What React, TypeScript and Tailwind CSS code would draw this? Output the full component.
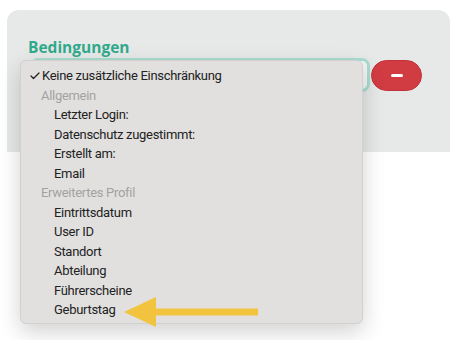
import { Check } from "lucide-react";

const groups = [
    { title: "Allgemein", items: ["Letzter Login:", "Datenschutz zugestimmt:", "Erstellt am:", "Email"] },
    {
        title: "Erweitertes Profil",
        items: ["Eintrittsdatum", "User ID", "Standort", "Abteilung", "Führerscheine", "Geburtstag"],
    },
];

const App = () => {
    return (
        <div className="relative w-[459px] h-[340px] bg-white overflow-hidden" style={{ fontFamily: "Roboto, 'Noto Sans', sans-serif" }}>
            <div className="ml-[7px] mt-[10px] w-[443px] h-[142px] rounded-t-[12px] bg-[#e6e9e8] px-[21px] pt-[28px]">
                <div className="text-[15.5px] font-bold leading-[19px] text-[#32a98c]" style={{ fontFamily: "'Open Sans', sans-serif" }}>
                    Bedingungen
                </div>
                <div className="mt-[1px] flex items-center gap-[1px]">
                    <div className="ml-[2px] h-[34px] w-[340px] rounded-[8px] border-[3px] border-[#a9dccf] bg-[#f4f5f5] flex items-center justify-end pr-[3px]">
                        <span className="text-[8px] text-gray-500">⌄</span>
                    </div>
                    <button className="h-[31px] w-[51px] rounded-full bg-[#d13c42] border border-[#c1323a] flex items-center justify-center">
                        <span className="block h-[3px] w-[12px] rounded-sm bg-white" />
                    </button>
                </div>
            </div>

            <div className="absolute left-[20px] top-[60px] w-[343px] h-[264px] rounded-[6px] bg-[#e1e0df] border border-[#d2d1d0] shadow-[0_8px_22px_rgba(0,0,0,0.18)] pt-[5px] text-[13px] tracking-[-0.3px] text-[#222]">
                <div className="flex items-center h-[19.5px] pl-[8px]">
                    <Check className="w-[12px] h-[12px] mr-[1px]" strokeWidth={2.5} />
                    <span>Keine zusätzliche Einschränkung</span>
                </div>
                {groups.map((g) => (
                    <div key={g.title}>
                        <div className="flex items-center h-[19.5px] pl-[20px] text-[#a3a2a1]">{g.title}</div>
                        {g.items.map((item) => (
                            <div key={item} className="flex items-center h-[19.5px] pl-[33px]">
                                {item}
                            </div>
                        ))}
                    </div>
                ))}
            </div>

            <svg className="absolute left-[120px] top-[294px]" width="142" height="36" viewBox="0 0 142 36">
                <polygon points="4,18 36,3 36,14.5 138,14.5 138,21.5 36,21.5 36,33" fill="#f2c33e" />
            </svg>
        </div>
    );
};

export default App;
